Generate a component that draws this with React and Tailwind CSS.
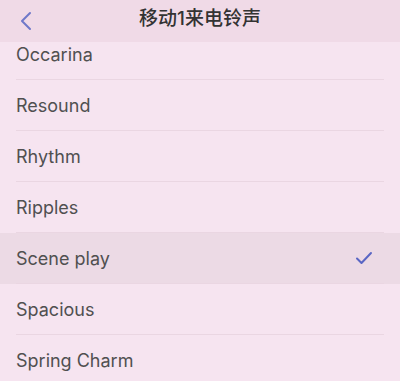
import React from "react";

const tones = ["Occarina", "Resound", "Rhythm", "Ripples", "Scene play", "Spacious", "Spring Charm"];
const selected = "Scene play";

export default function App() {
    return (
        <div
            className="w-[400px] h-[381px] overflow-hidden bg-[#f6e4f0] flex flex-col"
            style={{ fontFamily: 'Inter, "Noto Sans CJK SC", sans-serif' }}
        >
            {/* nav bar */}
            <div className="h-[42px] shrink-0 bg-[#f0dae7] flex items-center relative z-10">
                <div className="w-[48px] flex justify-center pl-1">
                    <svg width="14" height="20" viewBox="0 0 14 20" fill="none">
                        <path d="M11 2 L3 10 L11 18" stroke="#6f78c9" strokeWidth="2" strokeLinecap="round" strokeLinejoin="round" />
                    </svg>
                </div>
                <div className="flex-1 text-center text-[19px] text-[#333] font-medium pr-[48px] -mt-[3px]">移动1来电铃声</div>
            </div>

            {/* list */}
            <div className="flex-1 overflow-hidden">
                <div className="-mt-[13px]">
                    {tones.map((t, i) => (
                        <div key={t} className={t === selected ? "bg-[#ecdae5]" : ""}>
                            <div className="h-[50px] flex items-center px-4 justify-between">
                                <span className="text-[18px] text-[#505050]">{t}</span>
                                {t === selected && (
                                    <svg width="18" height="14" viewBox="0 0 18 14" fill="none" className="mr-[11px]">
                                        <path d="M2 7.5 L6.5 12 L16 2" stroke="#5a66c4" strokeWidth="2" strokeLinecap="round" strokeLinejoin="round" />
                                    </svg>
                                )}
                            </div>
                            <div className={i < tones.length - 1 ? "mx-4 border-b border-[#ead6e2]" : "h-px"} />
                        </div>
                    ))}
                </div>
            </div>
        </div>
    );
}
